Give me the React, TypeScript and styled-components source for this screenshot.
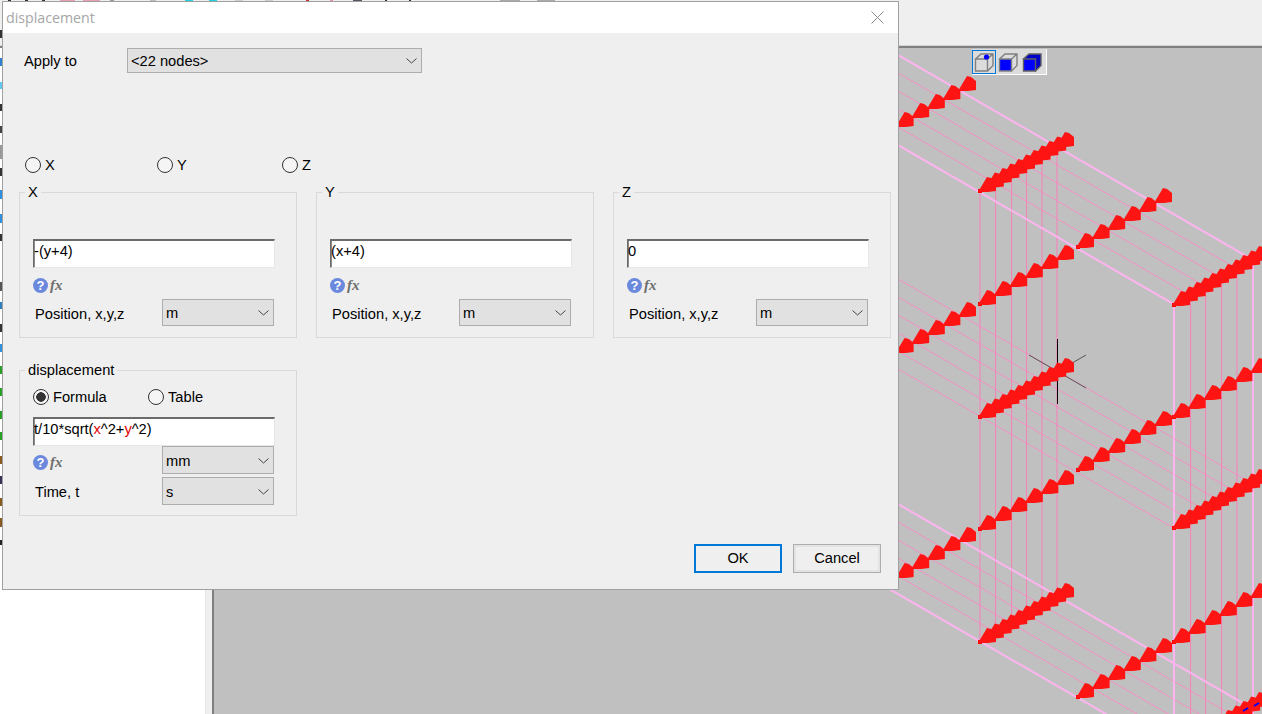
import React from 'react'
import styled, { createGlobalStyle } from 'styled-components'

const GlobalStyle = createGlobalStyle`
  html, body {
    margin: 0;
    padding: 0;
    background: #fff;
  }
  * {
    box-sizing: border-box;
  }
`

const Page = styled.div`
  position: relative;
  width: 1262px;
  height: 714px;
  overflow: hidden;
  display: grid;
  grid-template-columns: 205px 9px 1fr;
  grid-template-rows: 48px 1fr;
  font-family: 'Liberation Sans', Arial, sans-serif;
  font-size: 14.67px;
  color: #000;
`

const TopBar = styled.div`
  grid-column: 1 / 4;
  background: #efefef;
  border-bottom: 2px solid #808080;
  box-shadow: inset 0 -1px 0 #d4d4d4;
`

const SidePanel = styled.div`
  background: #fff;
`

const Splitter = styled.div`
  background: #f0f0f0;
  border-left: 1px solid #e4e4e4;
  border-right: 2px solid #808080;
`

const Viewport = styled.div`
  position: relative;
  background: #c0c0c0;
  overflow: hidden;
`

const ModelSvg = styled.svg`
  display: block;
`

// bits of the main window that stick out from behind the dialog
const BehindDialog = styled.svg`
  position: absolute;
  left: 0;
  top: 0;
`

const ViewToolbar = styled.div`
  position: absolute;
  left: 758px;
  top: 1px;
  display: flex;
  width: 75px;
  height: 26px;
  padding: 1px 0 0 0;
  background: #dcdcdc;
  border-right: 1px solid #fff;
  border-bottom: 1px solid #fff;
`

const ViewButton = styled.div<{ $active?: boolean }>`
  width: 24px;
  height: 24px;
  display: flex;
  align-items: center;
  justify-content: center;
  border: 1px solid ${(p) => (p.$active ? '#0078d7' : 'transparent')};
`

const Dialog = styled.div`
  position: absolute;
  left: 2px;
  top: 1px;
  width: 897px;
  height: 589px;
  display: flex;
  flex-direction: column;
  background: #efefef;
  border: 1px solid #a0a0a0;
`

const TitleBar = styled.div`
  height: 31px;
  flex: none;
  display: flex;
  align-items: center;
  justify-content: space-between;
  padding: 0 14px 0 3px;
  background: #fff;
`

const TitleText = styled.span`
  font-family: 'Open Sans', 'Noto Sans', sans-serif;
  font-size: 14.2px;
  color: #a6a6a6;
`

const Body = styled.div`
  flex: 1;
  padding: 15px 6px 0 16px;
`

const ApplyRow = styled.div`
  display: grid;
  grid-template-columns: 103px 295px;
  align-items: center;
  padding-left: 5px;
  height: 25px;
`

const RadioRow = styled.div`
  display: grid;
  grid-template-columns: 132px 125px auto;
  height: 16px;
  margin-top: 84px;
  padding-left: 6px;
`

const ModeRow = styled.div`
  display: grid;
  grid-template-columns: 115px auto;
  height: 16px;
  margin-top: 11px;
`

const RadioLabel = styled.label`
  display: flex;
  align-items: center;
  gap: 4px;
  line-height: 16px;
`

const RadioInput = styled.input.attrs({ type: 'radio', readOnly: true })`
  appearance: none;
  width: 16px;
  height: 16px;
  margin: 0;
  flex: none;
  border: 1px solid #333;
  border-radius: 50%;
  background: #f5f5f5;
  &:checked {
    background: radial-gradient(circle, #333 0 4.5px, #f5f5f5 5px);
  }
`

const AxisGrid = styled.div`
  display: grid;
  grid-template-columns: repeat(3, 278px);
  column-gap: 19px;
  margin-top: 11px;
`

const Group = styled.fieldset<{ $width?: string; $top?: string }>`
  width: ${(p) => p.$width || 'auto'};
  height: 154px;
  min-width: 0;
  margin: ${(p) => p.$top || '0'} 0 0 0;
  padding: 0 13px;
  border: 1px solid #d9d9d9;
`

const GroupLegend = styled.legend`
  height: 16px;
  margin-left: -8px;
  padding: 0 3px;
  line-height: 16px;
`

const FormulaBox = styled.div<{ $top: string }>`
  width: 242px;
  height: 29px;
  margin-top: ${(p) => p.$top};
  padding-top: 2px;
  line-height: 17px;
  background: #fff;
  border-style: solid;
  border-width: 2px 1px 1px 1px;
  border-color: #6b6b6b #e6e6e6 #e6e6e6 #6b6b6b;
  box-shadow: inset 1px 0 0 #8a8a8a;
  white-space: nowrap;
`

const Var = styled.span`
  color: #e00000;
`

const HelpRow = styled.div<{ $top?: string }>`
  display: flex;
  align-items: center;
  gap: 2px;
  height: 16px;
  margin-top: ${(p) => p.$top || '9px'};
`

const HelpDot = styled.span`
  width: 15px;
  height: 15px;
  display: flex;
  align-items: center;
  justify-content: center;
  border-radius: 50%;
  background: #6a88dc;
  color: #fff;
  font-size: 13px;
  font-weight: bold;
`

const FxMark = styled.span`
  font-family: 'Liberation Serif', serif;
  font-size: 15px;
  font-style: italic;
  font-weight: bold;
  color: #6e6e6e;
`

const UnitRow = styled.div<{ $top: string }>`
  display: grid;
  grid-template-columns: 129px 112px;
  align-items: center;
  margin-top: ${(p) => p.$top};
`

const RowLabel = styled.span`
  padding: 2px 0 0 2px;
`

const Dropdown = styled.div<{ $height?: string }>`
  height: ${(p) => p.$height || '27px'};
  display: flex;
  align-items: center;
  justify-content: space-between;
  padding: 1px 4px 0 3px;
  background: #e1e1e1;
  border: 1px solid #adadad;
  white-space: nowrap;
`

const Footer = styled.div`
  display: flex;
  justify-content: flex-end;
  gap: 11px;
  margin: 28px 11px 0 0;
`

const DialogButton = styled.div<{ $primary?: boolean }>`
  width: 88px;
  height: 29px;
  display: flex;
  align-items: center;
  justify-content: center;
  padding-bottom: 1px;
  background: #efefef;
  border: ${(p) => (p.$primary ? '2px solid #0078d7' : '1px solid #adadad')};
  box-shadow: ${(p) => (p.$primary ? 'none' : 'inset 0 0 0 2px #e3e3e3')};
`

const Chevron = () => (
  <svg width="11" height="6" viewBox="0 0 11 6" fill="none" stroke="#444" strokeWidth="1">
    <path d="M0.5 0.5 L5.5 5 L10.5 0.5" />
  </svg>
)

const CloseIcon = () => (
  <svg width="13" height="13" viewBox="0 0 13 13" fill="none" stroke="#8a8a8a" strokeWidth="1">
    <path d="M0.5 0.5 L12.5 12.5 M12.5 0.5 L0.5 12.5" />
  </svg>
)

const CubeWire = () => (
  <svg width="20" height="20" viewBox="0 0 20 20" fill="none" stroke="#808080" strokeWidth="1.4">
    <path d="M1.5 7 H13.5 V19 H1.5 Z M1.5 7 L7 2 H19 V13.5 L13.5 19 M13.5 7 L19 2" />
    <circle cx="12.5" cy="5" r="2.6" fill="#0000ff" stroke="none" />
  </svg>
)

const CubeFront = () => (
  <svg width="20" height="20" viewBox="0 0 20 20" fill="none" stroke="#808080" strokeWidth="1.4">
    <path d="M1.5 7 H13.5 V19 H1.5 Z" fill="#0000ff" />
    <path d="M1.5 7 L7 2 H19 V13.5 L13.5 19 M13.5 7 L19 2" />
  </svg>
)

const CubeSolid = () => (
  <svg width="20" height="20" viewBox="0 0 20 20" stroke="#606060" strokeWidth="1.4">
    <path d="M1.5 7 L7 2 H19 V13.5 L13.5 19 Z" fill="#0000c8" />
    <path d="M1.5 7 H13.5 V19 H1.5 Z" fill="#0000ff" />
  </svg>
)

const SLOPE = 0.5774
const START_X = 880

// each layer of the model: offsets at x=898 and where the lines meet the far edge
const layers = [
  { corner: 305, thick: [55, 145], thin: [73, 91, 109, 127] },
  { corner: 528, thick: [], thin: [279, 297, 315, 333, 351, 369] },
  { corner: 751, thick: [504, 594], thin: [522, 540, 558, 576] },
]

const lineFrom = (y0: number, corner: number) => {
  const endX = (corner - y0 + SLOPE * (898 + 1174)) / (2 * SLOPE)
  return {
    x1: START_X,
    y1: y0 + SLOPE * (START_X - 898),
    x2: endX,
    y2: y0 + SLOPE * (endX - 898),
  }
}

const frontColumns = [980, 995.6, 1011.6, 1026.6, 1042, 1057]
const sideColumns = [1174, 1190.6, 1205.6, 1221.6, 1237, 1253]

const arrowRows = [
  { x: 882, y: 135, dense: false },
  { x: 882, y: 361, dense: false },
  { x: 882, y: 586, dense: false },
  { x: 980, y: 191, dense: true },
  { x: 980, y: 304, dense: false },
  { x: 980, y: 417, dense: true },
  { x: 980, y: 529, dense: false },
  { x: 980, y: 642, dense: true },
  { x: 1078, y: 247, dense: false },
  { x: 1078, y: 470, dense: false },
  { x: 1078, y: 697, dense: false },
  { x: 1174, y: 305, dense: true },
  { x: 1174, y: 417, dense: false },
  { x: 1174, y: 528, dense: true },
  { x: 1174, y: 642, dense: false },
  { x: 1174, y: 751, dense: true },
]

const ArrowRow = ({ x, y, dense }: { x: number; y: number; dense: boolean }) => {
  const count = dense ? 11 : 6
  const step = dense ? 7.8 : 15.6
  return (
    <g fill="#ff1414">
      <rect x={x - 2} y={y - 2} width="4" height="4" fill="#f00" />
      {Array.from({ length: count }, (_, i) => {
        const tx = x + i * step
        const ty = y - i * step * SLOPE
        return (
          <polygon
            key={i}
            points={`${tx - 2},${ty + 1} ${tx + 7},${ty - 14} ${tx + 11},${ty - 13} ${tx + 16},${ty - 9} ${tx + 16},${ty} ${tx + 8},${ty + 1}`}
          />
        )
      })}
    </g>
  )
}

const ModelView = () => (
  <ModelSvg width="1048" height="666" viewBox="214 48 1048 666">
    {layers.map((layer) =>
      layer.thin.map((y0) => (
        <line key={y0} {...lineFrom(y0, layer.corner)} stroke="#f590c4" strokeWidth="1" />
      )),
    )}
    {frontColumns.map((x) => (
      <line
        key={x}
        x1={x}
        x2={x}
        y1={191 - SLOPE * (x - 980)}
        y2={642 - SLOPE * (x - 980)}
        stroke="#fb7fb8"
        strokeWidth="1"
      />
    ))}
    {sideColumns.map((x, i) => (
      <line
        key={x}
        x1={x}
        x2={x}
        y1={305 - SLOPE * (x - 1174)}
        y2={714}
        stroke={i === 0 || i === 5 ? '#ffb4f0' : '#fb7fb8'}
        strokeWidth={i === 0 || i === 5 ? 2 : 1}
      />
    ))}
    {layers.map((layer) =>
      layer.thick.map((y0) => (
        <line key={y0} {...lineFrom(y0, layer.corner)} stroke="#ffb4f0" strokeWidth="2" />
      )),
    )}
    <line x1="1029" y1="355" x2="1086" y2="388" stroke="#555" strokeWidth="1" />
    <line x1="1029" y1="388" x2="1086" y2="355" stroke="#555" strokeWidth="1" />
    <line x1="1057.5" y1="339" x2="1057.5" y2="404" stroke="#000" strokeWidth="1" />
    {arrowRows.map((row) => (
      <ArrowRow key={`${row.x}-${row.y}`} {...row} />
    ))}
    <path d="M1243 711 L1248 708 M1254 706 L1259 703" stroke="#0000ff" strokeWidth="2" />
  </ModelSvg>
)

const topBits = [
  [8, 3, '#333'], [25, 3, '#333'], [42, 3, '#333'], [60, 15, '#e8a0b0'], [83, 17, '#e8a0b0'],
  [110, 4, '#999'], [150, 6, '#bbb'], [185, 8, '#20d0d8'], [209, 8, '#20d0d8'], [235, 8, '#ccc'],
  [265, 8, '#ccc'], [306, 3, '#c83030'], [330, 3, '#e090a0'], [353, 9, '#556'], [385, 2, '#333'],
  [409, 2, '#333'], [500, 20, '#aaa'], [537, 18, '#aaa'],
] as const

const sideBits = [
  [30, 8, '#333'], [58, 8, '#3080d0'], [82, 7, '#60c8f0'], [104, 7, '#333'], [126, 7, '#444'],
  [145, 14, '#999'], [168, 8, '#333'], [190, 9, '#3090e0'], [214, 9, '#3090e0'], [234, 7, '#333'],
  [282, 9, '#555'], [302, 7, '#3080c0'], [324, 8, '#333'], [344, 8, '#3090e0'], [366, 8, '#28a028'],
  [388, 8, '#28a028'], [411, 8, '#28a028'], [432, 8, '#28a028'], [456, 8, '#8a5a20'], [476, 8, '#335'],
  [498, 8, '#8a5a20'], [518, 9, '#8a5a20'], [540, 5, '#222'],
] as const

const WindowEdges = () => (
  <BehindDialog width="900" height="590">
    {topBits.map(([x, w, c]) => (
      <rect key={x} x={x} y="0" width={w} height="1" fill={c} />
    ))}
    {sideBits.map(([y, h, c]) => (
      <rect key={y} x="0" y={y} width="2" height={h} fill={c} />
    ))}
  </BehindDialog>
)

const AxisGroup = ({ name, formula }: { name: string; formula: string }) => (
  <Group>
    <GroupLegend>{name}</GroupLegend>
    <FormulaBox $top="39px">{formula}</FormulaBox>
    <HelpRow>
      <HelpDot>?</HelpDot>
      <FxMark>fx</FxMark>
    </HelpRow>
    <UnitRow $top="6px">
      <RowLabel>Position, x,y,z</RowLabel>
      <Dropdown>
        m
        <Chevron />
      </Dropdown>
    </UnitRow>
  </Group>
)

const App = () => (
  <Page>
    <GlobalStyle />
    <TopBar />
    <SidePanel />
    <Splitter />
    <Viewport>
      <ModelView />
      <ViewToolbar>
        <ViewButton $active>
          <CubeWire />
        </ViewButton>
        <ViewButton>
          <CubeFront />
        </ViewButton>
        <ViewButton>
          <CubeSolid />
        </ViewButton>
      </ViewToolbar>
    </Viewport>
    <WindowEdges />
    <Dialog>
      <TitleBar>
        <TitleText>displacement</TitleText>
        <CloseIcon />
      </TitleBar>
      <Body>
        <ApplyRow>
          <span>Apply to</span>
          <Dropdown $height="25px">
            {'<22 nodes>'}
            <Chevron />
          </Dropdown>
        </ApplyRow>
        <RadioRow>
          <RadioLabel>
            <RadioInput name="axis" />X
          </RadioLabel>
          <RadioLabel>
            <RadioInput name="axis" />Y
          </RadioLabel>
          <RadioLabel>
            <RadioInput name="axis" />Z
          </RadioLabel>
        </RadioRow>
        <AxisGrid>
          <AxisGroup name="X" formula="-(y+4)" />
          <AxisGroup name="Y" formula="(x+4)" />
          <AxisGroup name="Z" formula="0" />
        </AxisGrid>
        <Group $width="278px" $top="24px">
          <GroupLegend>displacement</GroupLegend>
          <ModeRow>
            <RadioLabel>
              <RadioInput name="mode" defaultChecked />
              Formula
            </RadioLabel>
            <RadioLabel>
              <RadioInput name="mode" />
              Table
            </RadioLabel>
          </ModeRow>
          <FormulaBox $top="12px">
            t/10*sqrt(<Var>x</Var>^2+<Var>y</Var>^2)
          </FormulaBox>
          <UnitRow $top="0">
            <HelpRow $top="5px">
              <HelpDot>?</HelpDot>
              <FxMark>fx</FxMark>
            </HelpRow>
            <Dropdown $height="28px">
              mm
              <Chevron />
            </Dropdown>
          </UnitRow>
          <UnitRow $top="3px">
            <RowLabel>Time, t</RowLabel>
            <Dropdown $height="28px">
              s
              <Chevron />
            </Dropdown>
          </UnitRow>
        </Group>
        <Footer>
          <DialogButton $primary>OK</DialogButton>
          <DialogButton>Cancel</DialogButton>
        </Footer>
      </Body>
    </Dialog>
  </Page>
)

export default App
